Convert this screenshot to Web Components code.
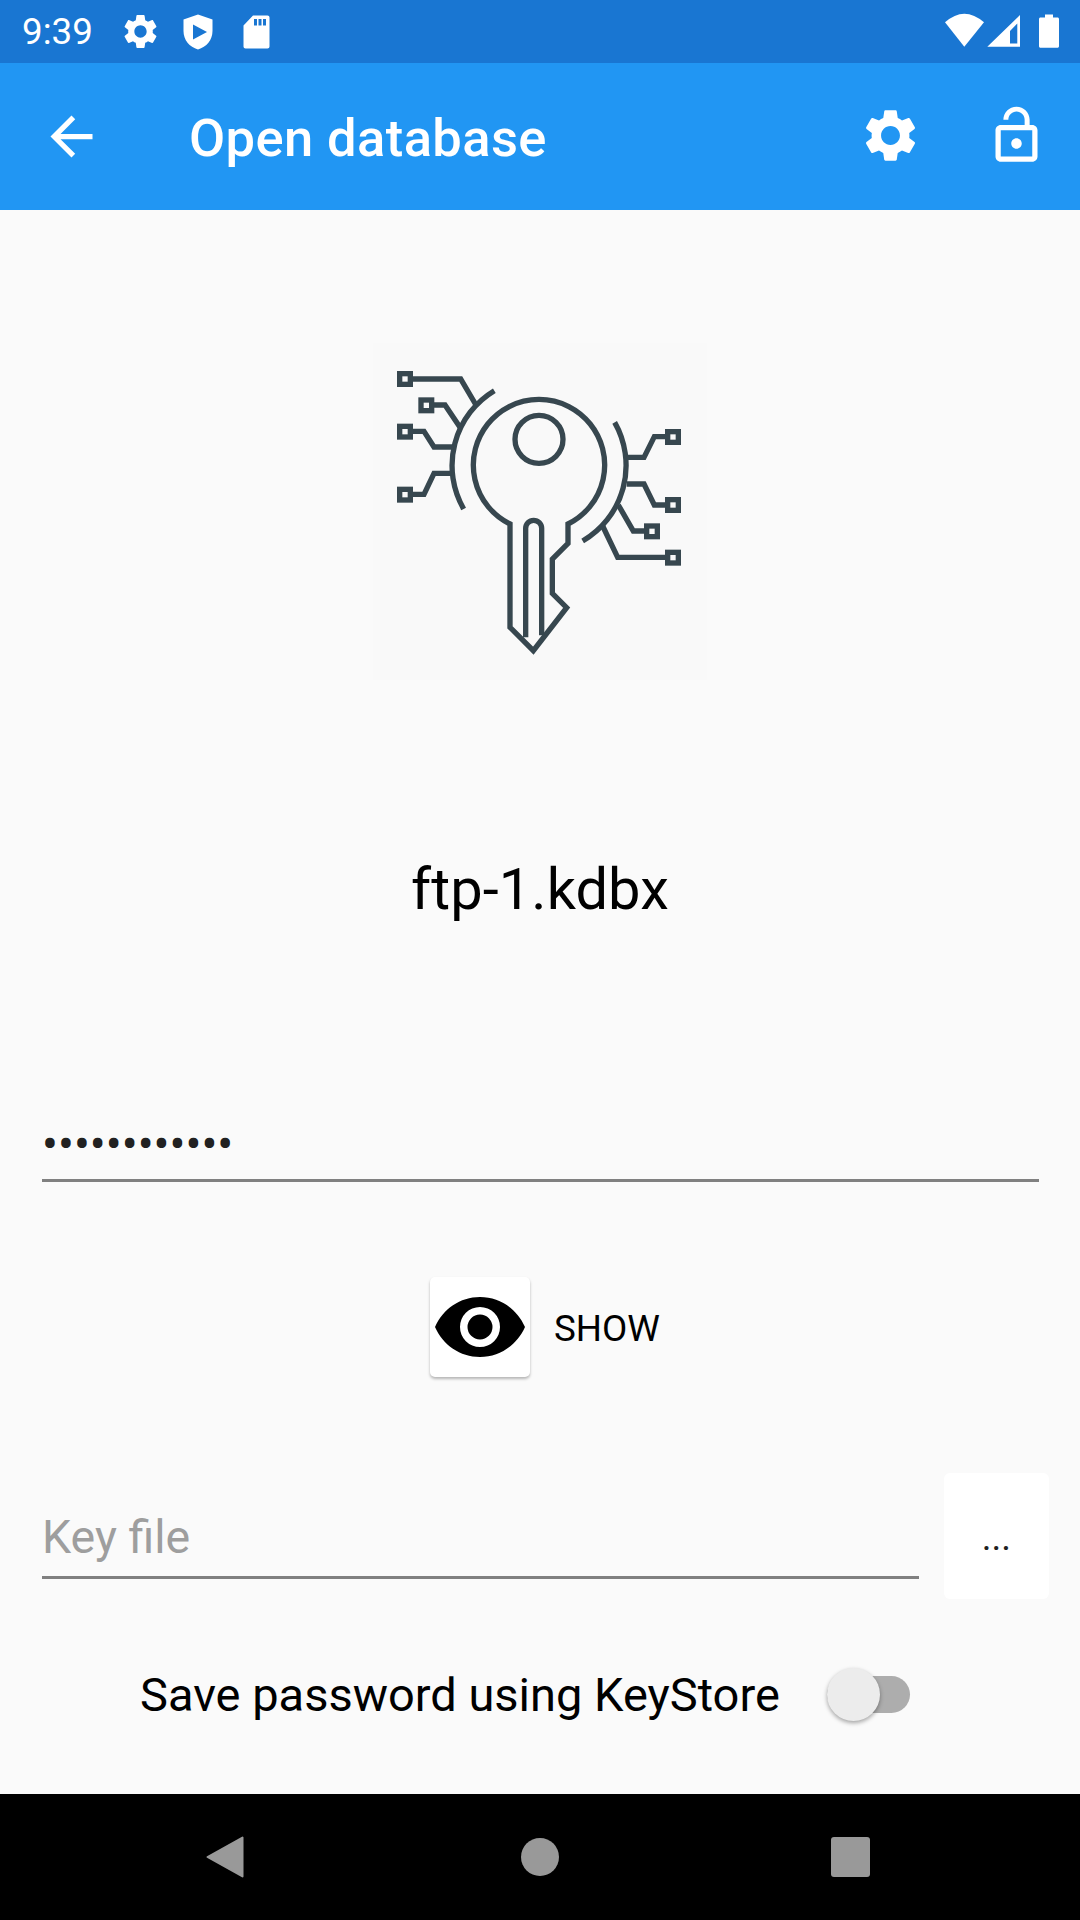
<!DOCTYPE html>
<html><head><meta charset="utf-8">
<style>
html,body{margin:0;padding:0;background:#fafafa;font-family:Roboto,"Liberation Sans",sans-serif}
</style></head><body>
<app-screen>
  <status-bar slot="top"></status-bar>
  <app-bar slot="top" title="Open database"></app-bar>
  <key-logo></key-logo>
  <db-name>ftp-1.kdbx</db-name>
  <password-field>••••••••••••</password-field>
  <show-toggle>SHOW</show-toggle>
  <keyfile-row placeholder="Key file"></keyfile-row>
  <keystore-switch>Save password using KeyStore</keystore-switch>
  <nav-bar slot="bottom"></nav-bar>
</app-screen>
<script>
const GEAR="M19.14 12.94c.04-.3.06-.61.06-.94 0-.32-.02-.64-.07-.94l2.03-1.58c.18-.14.23-.41.12-.61l-1.92-3.32c-.12-.22-.37-.29-.59-.22l-2.39.96c-.5-.38-1.03-.7-1.62-.94l-.36-2.54c-.04-.24-.24-.41-.48-.41h-3.84c-.24 0-.43.17-.47.41l-.36 2.54c-.59.24-1.13.57-1.62.94l-2.39-.96c-.22-.08-.47 0-.59.22L2.74 8.87c-.12.21-.08.47.12.61l2.03 1.58c-.05.3-.09.63-.09.94s.02.64.07.94l-2.03 1.58c-.18.14-.23.41-.12.61l1.92 3.32c.12.22.37.29.59.22l2.39-.96c.5.38 1.03.7 1.62.94l.36 2.54c.05.24.24.41.48.41h3.84c.24 0 .44-.17.47-.41l.36-2.54c.59-.24 1.13-.56 1.62-.94l2.39.96c.22.08.47 0 .59-.22l1.92-3.32c.12-.22.07-.47-.12-.61l-2.01-1.58zM12 15.6c-1.98 0-3.6-1.62-3.6-3.6s1.62-3.6 3.6-3.6 3.6 1.62 3.6 3.6-1.62 3.6-3.6 3.6z";
function def(name,html,init){
  customElements.define(name,class extends HTMLElement{
    constructor(){super();this.attachShadow({mode:"open"}).innerHTML=html;}
    connectedCallback(){if(init)init(this);}
  });
}
def("app-screen",`<style>
:host{display:flex;flex-direction:column;width:1080px;height:1920px;background:#fafafa;overflow:hidden}
main{flex:1;display:flex;flex-direction:column;min-height:0}
</style><slot name="top"></slot><main><slot></slot></main><slot name="bottom"></slot>`);
def("status-bar",`<style>
:host{display:flex;align-items:center;height:63px;background:#1976d2;color:#fff;padding-left:22px;box-sizing:border-box}
.t{font-size:36.75px;line-height:63px;width:97.5px;flex:none}
svg{display:block;fill:#fff;flex:none}
.sh{margin-left:22px}
.sd{margin-left:30px}
.r{margin-left:auto;margin-right:21px}
</style>
<span class="t">9:39</span>
<svg class="g" width="41" height="41" viewBox="0 0 24 24"><path d="${GEAR}"/></svg>
<svg class="sh" width="30" height="36" viewBox="0 0 30 36"><path fill-rule="evenodd" d="M15 0.5L29.5 5.5V17C29.5 26 23.5 33 15 35.5C6.5 33 .5 26 .5 17V5.5ZM10 10.5V25.5L24 18Z"/></svg>
<svg class="sd" width="27" height="34" viewBox="0 0 27 34"><path fill-rule="evenodd" d="M10 .5H24.5C25.6.5 26.5 1.4 26.5 2.5V31.5C26.5 32.6 25.6 33.5 24.5 33.5H2.5C1.4 33.5 .5 32.6 .5 31.5V10.5ZM11 4V10.5H14V4ZM15.5 4V10.5H18.5V4ZM20 4V10.5H23V4Z"/></svg>
<svg class="r" width="114" height="63" viewBox="945 0 114 63"><path d="M945 22.300Q964.300 5 984 22.300L964.300 46.700Z"/><path fill-rule="evenodd" d="M987.300 46.700L1020 15V46.700ZM1010 31V43.500H1017.300V23.500Z"/><path d="M1045 14.500H1053V17.500H1057.500C1058.300 17.500 1059 18.200 1059 19V46.200C1059 47 1058.300 47.700 1057.500 47.700H1040.500C1039.700 47.700 1039 47 1039 46.200V19C1039 18.200 1039.700 17.500 1040.500 17.500H1045Z"/></svg>`);
def("app-bar",`<style>
:host{display:flex;align-items:center;height:147px;background:#2196f3;color:#fff;box-sizing:border-box;padding-left:40px;padding-right:32px}
svg{display:block;fill:#fff;flex:none}
h1{margin:0 0 0 86px;font:500 52.500px/147px Roboto,sans-serif;letter-spacing:.4px;flex:1;padding-top:2px;height:147px;box-sizing:border-box}
.a{margin-bottom:1px}
.s{margin-right:63px;margin-bottom:3px}
.l{margin-bottom:3px}
</style>
<svg class="a" width="63" height="63" viewBox="0 0 24 24"><path d="M20 11H7.830l5.590-5.590L12 4l-8 8 8 8 1.410-1.410L7.830 13H20v-2z"/></svg>
<h1></h1>
<svg class="s" width="63" height="63" viewBox="0 0 24 24"><path d="${GEAR}"/></svg>
<svg class="l" width="63" height="63" viewBox="0 0 24 24"><path d="M12 17c1.100 0 2-.9 2-2s-.9-2-2-2-2 .9-2 2 .9 2 2 2zm6-9h-1V6c0-2.760-2.240-5-5-5S7 3.240 7 6h1.900c0-1.710 1.390-3.100 3.100-3.100 1.710 0 3.100 1.390 3.100 3.100v2H6c-1.100 0-2 .9-2 2v10c0 1.100.9 2 2 2h12c1.100 0 2-.9 2-2V10c0-1.100-.9-2-2-2zm0 12H6V10h12v10z"/></svg>`,
el=>{el.shadowRoot.querySelector("h1").textContent=el.getAttribute("title");el.removeAttribute("title");});
def("key-logo",`<style>
:host{display:block;width:340px;height:340px;margin:130px auto 0 370px}
svg{display:block}
.k{fill:none;stroke:#37474f;stroke-width:16}
</style>
<svg width="340" height="340" viewBox="0 0 1020 1020"><rect x="9" y="9" width="1002" height="1011" fill="#f9f9f9"/><g class="k">
<path d="M420 552A197 197 0 1 1 594 552V610L547 657V760L590 803L490 932L420 862Z"/>
<path d="M467 892V565A24 24 0 0 1 515 565V886"/>
<circle cx="507" cy="298" r="72"/>
<path d="M373 152A262 262 0 0 0 281 507"/>
<path d="M734 247A262 262 0 0 1 638 603"/>
<rect x="89" y="101" width="32" height="32"/><path d="M129 117H272L318 195"/>
<rect x="153" y="180" width="32" height="32"/><path d="M192 195H225L270 262"/>
<rect x="89" y="259" width="32" height="32"/><path d="M129 274H162L192 321H250"/>
<rect x="89" y="448" width="32" height="32"/><path d="M129 463H162L192 400H245"/>
<rect x="893" y="275" width="32" height="32"/><path d="M885 290H853L822 352H770"/>
<rect x="893" y="479" width="32" height="32"/><path d="M885 495H853L822 432H770"/>
<rect x="830" y="558" width="32" height="32"/><path d="M822 573H790L745 495"/>
<rect x="893" y="637" width="32" height="32"/><path d="M885 652H743L698 558"/>
</g></svg>`);
def("db-name",`<style>
:host{display:block;text-align:center;color:#000;font:400 57.75px/70px Roboto,sans-serif;letter-spacing:.1px;margin-top:174px;margin-bottom:1px}
</style><slot></slot>`);
def("password-field",`<style>
:host{display:block;margin:155px 41px 0 42px;height:99px;border-bottom:3px solid #808080;box-sizing:content-box;color:#212121;font:400 47.250px/60px Roboto,sans-serif}
span{display:block;padding-top:35px;padding-left:0}
</style><span><slot></slot></span>`);
def("show-toggle",`<style>
:host{display:flex;align-items:center;margin:95px 0 0 430px;height:100px;color:#000;font:400 36.750px/100px Roboto,sans-serif}
.b{width:100px;height:100px;background:#fff;border-radius:5px;box-shadow:0 2px 3px rgba(0,0,0,.28);display:flex;align-items:center;justify-content:center;margin-right:24px}
.l{padding-top:4px}
svg{display:block}
</style><div class="b"><svg width="100" height="100" viewBox="0 0 100 100"><path fill-rule="evenodd" d="M5 50C13 32 30 20 50 20C70 20 87 32 95 50C87 68 70 80 50 80C30 80 13 68 5 50ZM50 30A20 20 0 1 0 50 70A20 20 0 1 0 50 30ZM50 37.500A12.500 12.500 0 1 1 50 62.500A12.500 12.500 0 1 1 50 37.500Z"/></svg></div><span class="l"><slot></slot></span>`);
def("keyfile-row",`<style>
:host{display:flex;align-items:flex-start;margin:96px 31px 0 42px;height:126px}
.f{width:877px;height:103px;border-bottom:3px solid #808080;color:#9e9e9e;font:400 46.500px/60px Roboto,sans-serif;box-sizing:content-box}
.f span{display:block;padding:34px 0 0 0}
.b{margin-left:25px;width:105px;height:126px;background:#fff;border-radius:6px;color:#212121;font:400 37px/126px Roboto,sans-serif;text-align:center}
.b span{position:relative;top:2px}
</style><div class="f"><span id="p"></span></div><div class="b"><span>...</span></div>`,
el=>{el.shadowRoot.getElementById("p").textContent=el.getAttribute("placeholder");});
def("keystore-switch",`<style>
:host{display:flex;align-items:center;height:60px;margin:65px 0 0 140px;color:#000;font:400 47px/60px Roboto,sans-serif}
.tx{width:687px;white-space:nowrap;padding-top:2px}
.sw{position:relative;width:83px;height:37px;border-radius:19px;background:#adadad}
.th{position:absolute;left:0;top:-8px;width:53px;height:53px;border-radius:50%;background:#ececec;box-shadow:0 2px 4px rgba(0,0,0,.35)}
</style><div class="tx"><slot></slot></div><div class="sw"><div class="th"></div></div>`);
def("nav-bar",`<style>
:host{display:block;height:126px;background:#000}
svg{display:block}
</style><svg width="1080" height="126" viewBox="0 1794 1080 126">
<path fill="#999" stroke="#999" stroke-width="2" stroke-linejoin="round" d="M207.500 1857L242.500 1837.500V1876.500Z"/>
<circle cx="540" cy="1857" r="19" fill="#999"/>
<rect x="831" y="1837" width="39" height="40" rx="3" fill="#999"/>
</svg>`);
</script>
</body></html>
